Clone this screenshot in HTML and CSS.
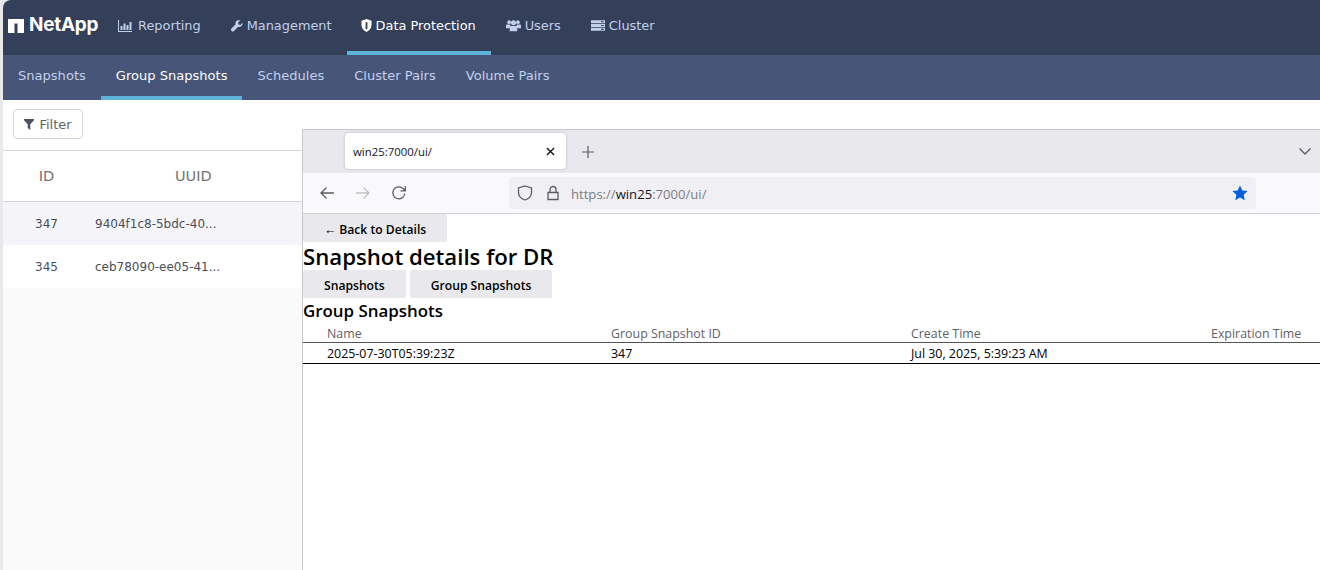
FILE: index.html
```html
<!DOCTYPE html>
<html lang="en">
<head>
<meta charset="utf-8">
<title>NetApp Data Protection</title>
<link rel="stylesheet" href="styles.css">
</head>
<body>
<div class="app">
  <header class="topnav">
    <div class="logo">
      <svg class="logo-mark" viewBox="0 0 16 14" width="16" height="14"><path d="M0 0H16V14H9.500V4.500H6.500V14H0Z" fill="#fff"/></svg>
      <span class="logo-text">NetApp</span>
    </div>
    <nav class="topnav-items">
      <a class="topnav-item"><svg class="ico ico-chart" viewBox="0 0 14 12"><path d="M0 0H1V11H14V12H0ZM2.500 6H4.500V10H2.500ZM5.500 3.500H7.500V10H5.500ZM8.500 5H10.500V10H8.500ZM11.500 2H13.500V10H11.500Z"/></svg>Reporting</a>
      <a class="topnav-item"><svg class="ico ico-wrench" viewBox="0 0 14 14"><path d="M13.500 3.200 11 5.700 8.800 5.200 8.300 3 10.800.5C9 -.2 7.200.2 6.200 1.300 5.200 2.400 5 3.800 5.400 5L.6 9.800C-.2 10.600-.2 11.900.6 12.700 1.400 13.500 2.700 13.500 3.500 12.700L8.300 7.900C9.600 8.400 11 8.100 12.100 7.100 13.300 6 13.800 4.500 13.500 3.200Z"/></svg>Management</a>
      <a class="topnav-item is-active"><svg class="ico ico-shield" viewBox="0 0 12 14"><path fill-rule="evenodd" d="M6 0 11.500 1.800V6.500C11.500 10 9 12.500 6 14 3 12.500.5 10 .5 6.500V1.800ZM5 3.500H7V10.500L6 11.300 5 10.500Z"/></svg>Data Protection</a>
      <a class="topnav-item"><svg class="ico ico-users" viewBox="0 0 16 12"><circle cx="3.300" cy="2.500" r="2"/><circle cx="12.700" cy="2.500" r="2"/><circle cx="8" cy="3" r="2.700"/><path d="M0 5.500C0 5 .5 4.800 1 4.800H4.500L4.700 7 3.500 9H0ZM16 5.500C16 5 15.500 4.800 15 4.800H11.500L11.300 7 12.500 9H16ZM5 6.500H11L12 8V12H4V8Z"/></svg>Users</a>
      <a class="topnav-item"><svg class="ico ico-server" viewBox="0 0 16 12"><path fill-rule="evenodd" d="M0 0H16V3.300H0ZM0 4.300H16V7.600H0ZM0 8.700H16V12H0ZM11.500 1V2.300H14.500V1ZM11.500 5.300V6.600H14.500V5.300ZM11.500 9.700V11H14.500V9.700Z"/></svg>Cluster</a>
    </nav>
  </header>
  <nav class="subnav">
    <a class="subnav-item">Snapshots</a>
    <a class="subnav-item is-active">Group Snapshots</a>
    <a class="subnav-item">Schedules</a>
    <a class="subnav-item">Cluster Pairs</a>
    <a class="subnav-item">Volume Pairs</a>
  </nav>
  <main class="content">
    <section class="panel">
      <div class="filter-row">
        <button class="filter-btn"><svg class="filter-ico" viewBox="0 0 10 11"><path d="M0 0H10V1.300L6.300 5.300V11L3.700 9V5.300L0 1.300Z"/></svg>Filter</button>
      </div>
      <div class="grid-row grid-head"><span class="col-id">ID</span><span class="col-uuid">UUID</span></div>
      <div class="grid-row grid-body is-alt"><span class="col-id">347</span><span class="col-uuid-val">9404f1c8-5bdc-40...</span></div>
      <div class="grid-row grid-body"><span class="col-id">345</span><span class="col-uuid-val">ceb78090-ee05-41...</span></div>
    </section>
    <section class="browser">
      <div class="tabstrip">
        <div class="tab"><span class="tab-title">win25:7000/ui/</span>
          <svg class="tab-close" viewBox="0 0 10 10"><path d="M1 1 9 9M9 1 1 9"/></svg>
        </div>
        <svg class="new-tab" viewBox="0 0 12 12"><path d="M6 0V12M0 6H12"/></svg>
        <svg class="tabs-menu" viewBox="0 0 12 7"><path d="M.5.5 6 6 11.500.5"/></svg>
      </div>
      <div class="toolbar">
        <svg class="tb-ico" viewBox="0 0 16 16"><path d="M15 8H2M7.500 2.500 2 8 7.500 13.500"/></svg>
        <svg class="tb-ico is-disabled" viewBox="0 0 16 16"><path d="M1 8H14M8.500 2.500 14 8 8.500 13.500"/></svg>
        <svg class="tb-ico" viewBox="0 0 16 16"><path d="M13.800 8.500A6 6 0 1 1 12 3.500L14 5.500M14.300 1V5.800H9.500"/></svg>
        <div class="urlbar">
          <svg class="url-ico" viewBox="0 0 16 16"><path d="M8 1 14.500 3V7.500C14.500 11 12 13.700 8 15 4 13.700 1.500 11 1.500 7.500V3Z"/></svg>
          <svg class="url-ico" viewBox="0 0 16 16"><path d="M3 7.500H13V14.500H3ZM5 7.500V4.500A3 3 0 0 1 11 4.500V7.500"/></svg>
          <span class="url-text">https://<b class="url-host">win25</b>:7000/ui/</span>
          <svg class="url-star" viewBox="0 0 16 16"><path d="M8 .5 10.300 5.400 15.600 6.100 11.700 9.800 12.700 15.200 8 12.600 3.300 15.200 4.300 9.800.4 6.100 5.700 5.400Z"/></svg>
        </div>
      </div>
      <div class="page">
        <button class="page-btn">← Back to Details</button>
        <h1 class="page-title">Snapshot details for DR</h1>
        <div class="page-tabs">
          <button class="page-btn">Snapshots</button>
          <button class="page-btn">Group Snapshots</button>
        </div>
        <h2 class="page-subtitle">Group Snapshots</h2>
        <table class="snap-table">
          <colgroup><col class="c1"><col class="c2"><col class="c3"><col class="c4"></colgroup>
          <thead><tr><th>Name</th><th>Group Snapshot ID</th><th>Create Time</th><th>Expiration Time</th></tr></thead>
          <tbody><tr><td>2025-07-30T05:39:23Z</td><td>347</td><td>Jul 30, 2025, 5:39:23 AM</td><td></td></tr></tbody>
        </table>
      </div>
    </section>
  </main>
</div>
</body>
</html>
```
FILE: styles.css
```css
* { box-sizing: border-box; }
html, body { height: 100%; }
body {
  margin: 0;
  background: #e9e9e9;
  overflow: hidden;
  font-family: "DejaVu Sans", sans-serif;
}
.app {
  height: 570px;
  margin-left: 3px;
  display: flex;
  flex-direction: column;
  background: #fff;
  border-top-left-radius: 8px;
  overflow: hidden;
}
.topnav {
  height: 55px;
  flex: none;
  display: flex;
  background: #343f5a;
  padding-left: 5px;
}
.logo { display: flex; align-items: center; width: 95px; padding-bottom: 4px; flex: none; }
.logo-mark { margin-right: 5px; flex: none; }
.logo-text {
  font: 700 18.900px/1 "Inter", sans-serif;
  color: #fff;
  letter-spacing: -.2px;
}
.topnav-items { display: flex; }
.topnav-item {
  height: 55px;
  padding: 0 15px;
  display: flex;
  align-items: center;
  font-size: 12.900px;
  color: #c3d0ec;
  border-bottom: 4px solid transparent;
  white-space: nowrap;
}
.topnav-item.is-active { color: #fff; border-bottom-color: #5fb3d9; padding: 0 15px 0 14px; }
.ico { fill: currentColor; margin-right: 5px; flex: none; }
.ico-chart { width: 14px; height: 12px; margin-right: 6px; }
.ico-wrench { width: 12px; height: 12px; margin-right: 4px; }
.ico-shield { width: 11px; height: 13px; margin-right: 4px; }
.ico-users { width: 15px; height: 13px; margin-right: 4px; }
.ico-server { width: 14px; height: 11px; margin-right: 4px; }
.subnav {
  height: 45px;
  flex: none;
  display: flex;
  background: #465578;
}
.subnav-item {
  padding: 0 15px;
  display: flex;
  align-items: center;
  font-size: 13.050px;
  color: #c3d0ec;
  border-bottom: 4px solid transparent;
  white-space: nowrap;
}
.subnav-item.is-active { color: #fff; border-bottom-color: #5fb3d9; }
.content { flex: 1; display: flex; min-height: 0; }
.panel { width: 299px; flex: none; background: #fafafa; }
.filter-row {
  height: 51px;
  padding: 9px 10px 0;
  background: #fff;
  border-bottom: 1px solid #d5d5d8;
}
.filter-btn {
  height: 30px;
  width: 70px;
  display: flex;
  align-items: center;
  justify-content: center;
  background: #fff;
  border: 1px solid #d5d5d8;
  border-radius: 4px;
  font: 13px "DejaVu Sans", sans-serif;
  color: #5f6368;
  padding: 0;
}
.filter-ico { width: 10px; height: 11px; fill: #4a5260; margin-right: 5px; }
.grid-row { display: flex; align-items: center; font-size: 12px; color: #4a4f57; }
.grid-head {
  height: 51px;
  background: #fff;
  border-bottom: 1px solid #d5d5d8;
  font-size: 14.500px;
  color: #77746f;
}
.grid-body { height: 43px; background: #fff; }
.grid-body.is-alt { background: #f5f5f9; }
.col-id { width: 87px; text-align: center; }
.col-uuid { width: 206px; text-align: left; padding-left: 85px; }
.col-uuid-val { margin-left: 5px; }
.browser {
  flex: 1;
  min-width: 0;
  margin-top: 29px;
  background: #fff;
  font-family: "Open Sans", sans-serif;
  border-left: 1px solid #c8c8cc;
  border-top: 1px solid #c8c8cc;
  display: flex;
  flex-direction: column;
}
.tabstrip {
  height: 43px;
  flex: none;
  display: flex;
  align-items: center;
  background: #e9e9ed;
  padding-left: 42px;
}
.tab {
  width: 221px;
  height: 36px;
  margin-bottom: 1px;
  background: #fff;
  border-radius: 4px;
  box-shadow: 0 0 3px rgba(0, 0, 0, .22);
  display: flex;
  align-items: center;
  justify-content: space-between;
  padding: 0 11px 0 8px;
  flex: none;
}
.tab-title { font-size: 11.400px; color: #15141a; }
.tab-close { width: 9px; height: 9px; fill: none; stroke: #15141a; stroke-width: 1.500; }
.new-tab { width: 12px; height: 12px; margin-left: 16px; fill: none; stroke: #5b5b66; stroke-width: 1.200; }
.tabs-menu { width: 12px; height: 7px; margin-left: auto; margin-right: 9px; fill: none; stroke: #5b5b66; stroke-width: 1.300; }
.toolbar {
  height: 41px;
  flex: none;
  display: flex;
  align-items: center;
  background: #f9f9fb;
  border-bottom: 1px solid #cfcfd8;
  padding-left: 16px;
}
.tb-ico { width: 16px; height: 16px; margin-right: 20px; fill: none; stroke: #5b5b66; stroke-width: 1.300; flex: none; }
.tb-ico.is-disabled { stroke: #c0c0c6; }
.urlbar {
  width: 747px;
  height: 32px;
  margin-left: 82px;
  flex: none;
  display: flex;
  align-items: center;
  background: #f0f0f4;
  border-radius: 4px;
  padding: 0 8px;
}
.url-ico { width: 16px; height: 16px; margin-right: 12px; fill: none; stroke: #5b5b66; stroke-width: 1.300; flex: none; }
.url-text { font-size: 13.100px; color: #7c7c85; white-space: nowrap; margin-left: -2px; padding-top: 2px; }
.url-host { font-weight: 400; color: #15141a; }
.url-star { width: 16px; height: 16px; margin-left: auto; fill: #0060df; }
.page { flex: 1; min-height: 0; color: #000; }
.page-btn {
  height: 28px;
  padding: 3px 21px 0;
  margin: 0;
  display: block;
  background: #e9e9ed;
  border: 0;
  border-radius: 2px;
  font: 600 12.150px "Open Sans", sans-serif;
  color: #000;
}
.page-title { margin: 0; height: 28px; font-size: 22.200px; line-height: 30px; font-weight: 600; }
.page-tabs { display: flex; gap: 4px; }
.page-subtitle { margin: 0; height: 26px; font-size: 16.900px; line-height: 26px; font-weight: 600; }
.snap-table { width: 100%; border-collapse: collapse; table-layout: fixed; font-size: 12.400px; line-height: 14px; }
.c1 { width: 284px; }
.c2 { width: 300px; }
.c3 { width: 300px; }
.snap-table th {
  height: 18px;
  padding: 2px 0 0 24px;
  text-align: left;
  font-weight: 400;
  color: #5f5f66;
  border-bottom: 1px solid #555;
}
.snap-table td {
  height: 21px;
  padding: 3px 0 0 24px;
  border-bottom: 1px solid #000;
}
```
